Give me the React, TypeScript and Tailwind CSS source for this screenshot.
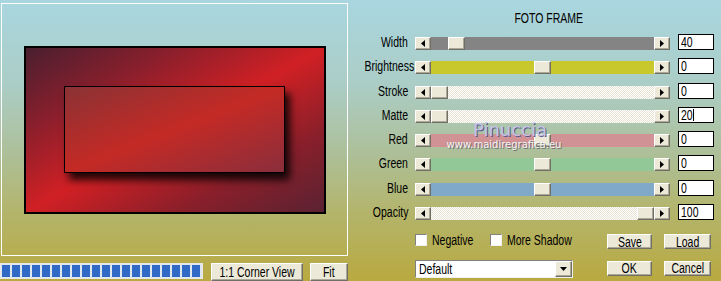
import React from 'react';

type Row = {
  label: string;
  value: string;
  track: string;
  thumb: 'start' | 'mid' | 'end' | 'width';
};

const rows: Row[] = [
  { label: 'Width', value: '40', track: 'bg-[#848484]', thumb: 'width' },
  { label: 'Brightness', value: '0', track: 'bg-[#c8c82c]', thumb: 'mid' },
  { label: 'Stroke', value: '0', track: 'dither', thumb: 'start' },
  { label: 'Matte', value: '20', track: 'dither', thumb: 'start' },
  { label: 'Red', value: '0', track: 'bg-[#d09294]', thumb: 'mid' },
  { label: 'Green', value: '0', track: 'bg-[#92c898]', thumb: 'mid' },
  { label: 'Blue', value: '0', track: 'bg-[#80a8c8]', thumb: 'mid' },
  { label: 'Opacity', value: '100', track: 'dither', thumb: 'end' },
];

const raised =
  'bg-[#ece9d8] border border-t-white border-l-white border-r-[#716f64] border-b-[#716f64] shadow-[inset_-1px_-1px_0_#aca899]';

const sunken = 'bg-white border border-t-[#808080] border-l-[#808080] border-r-[#f0f0f0] border-b-[#f0f0f0]';

const dither =
  'bg-[repeating-conic-gradient(#ffffff_0_25%,#e6e2d4_0_50%)] bg-[length:2px_2px]';

// narrow text, the dialog uses a condensed system font
function T({ children, origin = 'origin-center' }: { children: React.ReactNode; origin?: string }) {
  return <span className={`inline-block whitespace-nowrap scale-x-[0.75] ${origin}`}>{children}</span>;
}

function Arrow({ dir }: { dir: 'left' | 'right' }) {
  return (
    <div className={`w-[16px] h-full flex items-center justify-center ${raised}`}>
      <svg width="4" height="7" viewBox="0 0 4 7">
        {dir === 'left' ? <path d="M4 0 L0 3.5 L4 7 Z" fill="#000" /> : <path d="M0 0 L4 3.5 L0 7 Z" fill="#000" />}
      </svg>
    </div>
  );
}

function Slider({ row }: { row: Row }) {
  const trackCls = row.track === 'dither' ? dither : row.track;
  const thumbPos =
    row.thumb === 'start'
      ? 'justify-start'
      : row.thumb === 'end'
        ? 'justify-end'
        : row.thumb === 'mid'
          ? 'justify-center'
          : 'justify-start pl-[17px]';
  return (
    <div className="flex h-[13px] w-[255px]">
      <Arrow dir="left" />
      <div className={`flex-1 flex ${thumbPos} ${trackCls}`}>
        <div className={`w-[17px] h-full ${raised}`} />
      </div>
      <Arrow dir="right" />
    </div>
  );
}

function Checkbox({ label, width }: { label: string; width: string }) {
  return (
    <div className={`flex items-center gap-[5px] ${width}`}>
      <div className={`shrink-0 w-[12px] h-[12px] ${sunken}`} />
      <T origin="origin-left">{label}</T>
    </div>
  );
}

export default function App() {
  return (
    <div
      className="w-[721px] h-[281px] overflow-hidden flex text-black text-[14px] leading-none bg-[linear-gradient(to_bottom,#a9d6e0_0%,#abcdc6_30%,#adbf98_55%,#b3b56c_75%,#b9a940_100%)]"
      style={{ fontFamily: '"Liberation Sans", Arial, sans-serif' }}
    >
      {/* preview side */}
      <div className="w-[348px] shrink-0">
        <div className="ml-[1px] mt-[3px] w-[347px] h-[253px] border border-white flex items-center justify-center">
          <div className="w-[302px] h-[168px] border-2 border-black flex items-center justify-center bg-[linear-gradient(to_bottom_right,#4a1f30_0%,#8a1f2c_25%,#d02024_50%,#8a1f2a_75%,#5a2232_100%)]">
            <div className="w-[221px] h-[87px] border border-black bg-[linear-gradient(to_bottom_right,#8a3235_0%,#c42a25_50%,#8a2e3c_100%)] shadow-[5px_7px_8px_rgba(0,0,0,0.85)]" />
          </div>
        </div>
        <div className="mt-[7px] flex items-start">
          <div className="w-[203px] h-[16px] border border-[#e8e8e8] bg-[#dfe6f0] flex gap-[2px] p-[1px]">
            {Array.from({ length: 20 }).map((_, i) => (
              <div key={i} className="w-[8px] h-full bg-[#3169c6]" />
            ))}
          </div>
          <div className={`ml-[8px] w-[92px] h-[18px] flex items-center justify-center ${raised}`}>
            <T>1:1 Corner View</T>
          </div>
          <div className={`ml-[7px] w-[38px] h-[18px] flex items-center justify-center ${raised}`}>
            <T>Fit</T>
          </div>
        </div>
      </div>

      {/* controls side */}
      <div className="relative flex-1">
        <div className="h-[34px] pt-[11px] pl-[155px]">
          <T>FOTO FRAME</T>
        </div>
        <div className="flex flex-col gap-[8.3px]">
          {rows.map((row) => (
            <div key={row.label} className="flex items-end h-[16px] shrink-0">
              <div className="w-[60px] self-center text-right">
                <T origin="origin-right">{row.label}</T>
              </div>
              <div className="ml-[7px]">
                <Slider row={row} />
              </div>
              <div className="ml-[8px] w-[36px] h-[16px] bg-white border border-black pl-[2px] flex items-center">
                <T origin="origin-left">{row.value}</T>
                {row.label === 'Matte' && <span className="-ml-[4px] w-[1px] h-[12px] bg-black" />}
              </div>
            </div>
          ))}
        </div>
        <div className="mt-[14px] flex pl-[67px]">
          <div className="w-[158px] flex flex-col">
            <div className="flex h-[12px]">
              <Checkbox label="Negative" width="w-[75px]" />
              <Checkbox label="More Shadow" width="w-[83px]" />
            </div>
            <div className={`mt-[14px] h-[18px] flex ${sunken}`}>
              <div className="flex-1 pl-[3px] flex items-center">
                <T origin="origin-left">Default</T>
              </div>
              <div className={`w-[17px] h-full flex items-center justify-center ${raised}`}>
                <svg width="7" height="4" viewBox="0 0 7 4">
                  <path d="M0 0 L7 0 L3.5 4 Z" fill="#000" />
                </svg>
              </div>
            </div>
          </div>
          <div className="ml-[34px] grid grid-cols-[45px_47px] gap-x-[12px] gap-y-[9px]">
            <div className={`h-[15px] flex items-center justify-center ${raised}`}>
              <T>Save</T>
            </div>
            <div className={`h-[15px] flex items-center justify-center ${raised}`}>
              <T>Load</T>
            </div>
            <div className={`h-[15px] flex items-center justify-center ${raised}`}>
              <T>OK</T>
            </div>
            <div className={`h-[15px] flex items-center justify-center ${raised}`}>
              <T>Cancel</T>
            </div>
          </div>
        </div>

        {/* watermark */}
        <div
          className="absolute left-[97px] top-[121px] w-[130px] flex flex-col items-center pointer-events-none"
          style={{ fontFamily: '"DejaVu Sans", sans-serif' }}
        >
          <span className="text-[18px] text-[#c4c4e6] [text-shadow:1px_1px_0_#5a5a8a]">Pinuccia</span>
          <span className="mt-[1px] -ml-[12px] text-[10px] text-[#f4f4f4] [text-shadow:1px_1px_0_#707070]">
            www.maidiregrafica.eu
          </span>
        </div>
      </div>
    </div>
  );
}
